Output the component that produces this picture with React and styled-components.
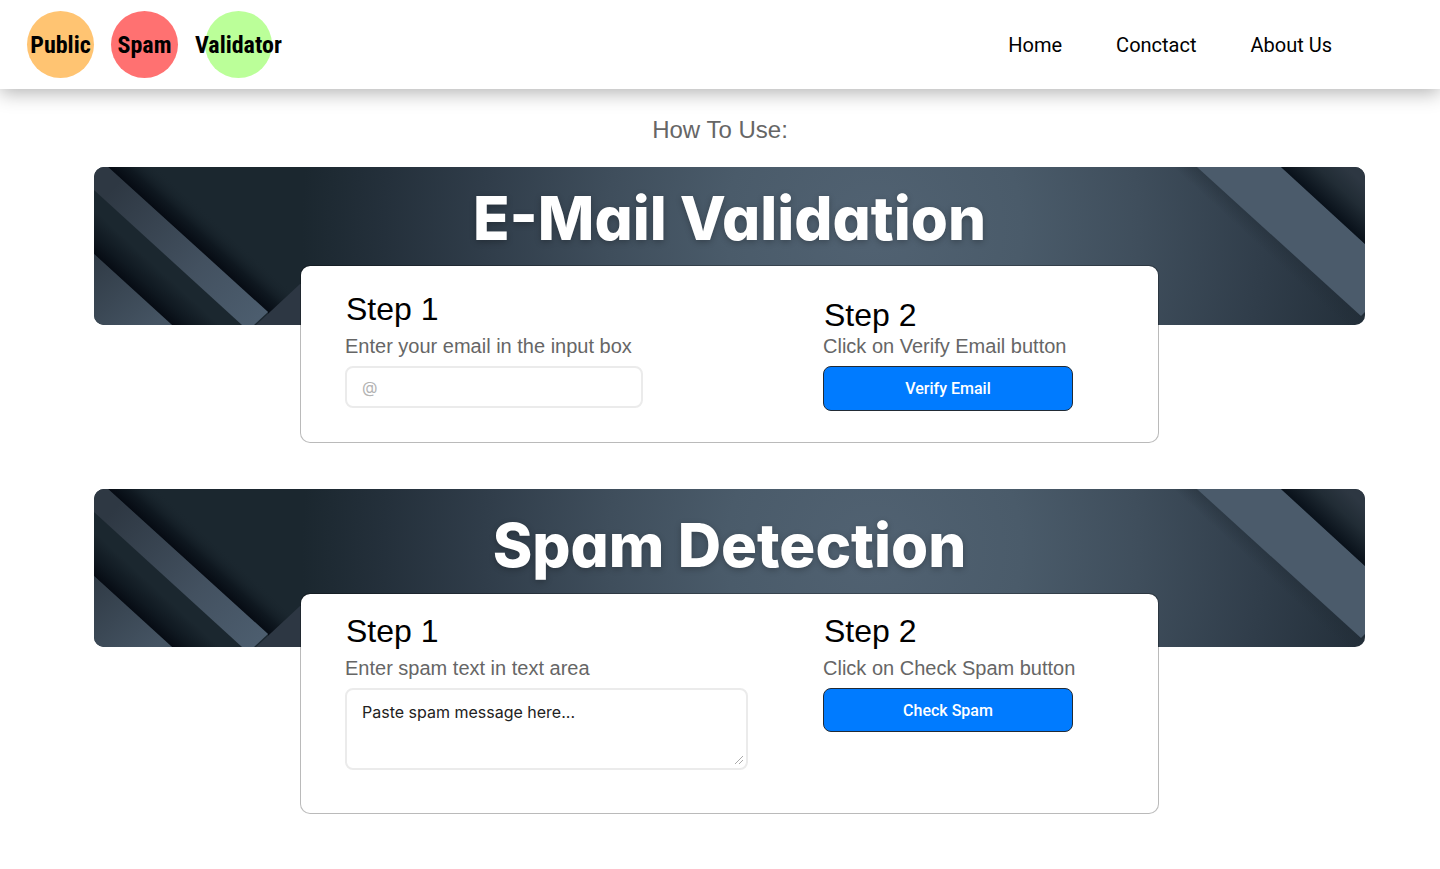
import React, { useId } from "react";
import styled, { createGlobalStyle } from "styled-components";

const GlobalStyle = createGlobalStyle`
  *, *::before, *::after { box-sizing: border-box; }
  body {
    margin: 0;
    background: #fff;
    color: #000;
    font-family: "Liberation Sans", Arial, sans-serif;
  }
`;

const Header = styled.header`
  display: flex;
  align-items: center;
  justify-content: space-between;
  height: 89px;
  padding: 0 108px 0 27px;
  background: #fff;
  box-shadow: 0 4px 18px rgba(0, 0, 0, 0.3);
`;

const Logo = styled.a`
  display: flex;
  gap: 17px;
  color: #000;
  text-decoration: none;
`;

const LogoWord = styled.span`
  display: grid;
  place-items: center;
  font-family: "Roboto Condensed", Roboto, sans-serif;
  font-size: 24px;
  font-weight: 700;
  line-height: 28px;

  &::before {
    content: "";
    grid-area: 1 / 1;
    width: 67px;
    height: 67px;
    border-radius: 50%;
    background: ${(p) => p.$color};
  }
`;

const LogoText = styled.span`
  grid-area: 1 / 1;
  z-index: 1;
`;

const Nav = styled.nav`
  display: flex;
  gap: 54px;
`;

const NavLink = styled.a`
  color: #000;
  font-family: Roboto, sans-serif;
  font-size: 20px;
  line-height: 24px;
  text-decoration: none;
`;

const Intro = styled.p`
  margin: 27px 0 23px;
  color: #666;
  font-size: 24px;
  line-height: 28px;
  text-align: center;
`;

const Main = styled.main`
  display: flex;
  flex-direction: column;
  gap: 46px;
  padding: 0 75px 55px 94px;
`;

const Guide = styled.section`
  display: flex;
  flex-direction: column;
  align-items: center;
`;

const Banner = styled.div`
  display: grid;
  width: 100%;
  height: 158px;
  border-radius: 10px;
  overflow: hidden;
`;

const Artwork = styled.svg`
  grid-area: 1 / 1;
  display: block;
  width: 100%;
  height: 158px;
`;

const Title = styled.h1`
  grid-area: 1 / 1;
  z-index: 1;
  place-self: start center;
  margin: 0;
  padding-top: ${(p) => p.$top}px;
  color: #fff;
  font-family: Inter, Lato, sans-serif;
  font-size: 60px;
  font-weight: 800;
  line-height: 76px;
  font-feature-settings: "cv11" 1;
  text-shadow: 0 2px 6px rgba(0, 0, 0, 0.25);
`;

const Card = styled.div`
  display: grid;
  grid-template-columns: minmax(0, 478fr) minmax(0, 289fr);
  align-items: start;
  z-index: 2;
  width: 68%;
  max-width: 859px;
  margin-top: -${(p) => p.$overlap}px;
  padding: ${(p) => p.$padTop}px 46px ${(p) => p.$padBottom}px 44px;
  border: 1px solid rgba(0, 0, 0, 0.27);
  border-radius: 10px;
  background: #fff;
  background-clip: padding-box;
`;

const Step = styled.div`
  display: flex;
  flex-direction: column;
  align-items: flex-start;
  gap: ${(p) => (p.$tight ? 0 : 6)}px;
  padding-top: ${(p) => (p.$tight ? 6 : 0)}px;
`;

const StepTitle = styled.h2`
  margin: 0 0 0 1px;
  font-size: 32px;
  font-weight: 400;
  line-height: 38px;
`;

const Field = styled.div`
  display: flex;
  flex-direction: column;
  gap: 8px;
  max-width: 100%;
`;

const Hint = styled.label`
  color: #666;
  font-size: 20px;
  line-height: 24px;
  white-space: nowrap;
`;

const TextInput = styled.input`
  width: 298px;
  height: 42px;
  padding: 0 15px;
  border: 2px solid #ebebeb;
  border-radius: 8px;
  outline: 0;
  font-family: Inter, sans-serif;
  font-size: 16px;

  &::placeholder { color: #b3b3b3; opacity: 1; }
`;

const TextArea = styled.textarea`
  display: block;
  width: 403px;
  height: 82px;
  padding: 12px 15px;
  border: 2px solid #ebebeb;
  border-radius: 8px;
  outline: 0;
  font-family: Inter, sans-serif;
  font-size: 16px;
  line-height: 20px;

  &::placeholder { color: #222; opacity: 1; }

  &::-webkit-resizer {
    background: linear-gradient(
      135deg,
      transparent 0 46%,
      #aaa 46% 54%,
      transparent 54% 70%,
      #aaa 70% 78%,
      transparent 78%
    ) 4px 3px / 8px 8px no-repeat;
  }
`;

const ActionButton = styled.button`
  width: 250px;
  height: ${(p) => p.$height}px;
  border: 1px solid #222b35;
  border-radius: 8px;
  background: #007bff;
  color: #fff;
  font-family: Roboto, sans-serif;
  font-size: 16px;
  font-weight: 500;
  cursor: pointer;
`;

function BannerArt() {
  const id = useId().replace(/[^a-zA-Z0-9]/g, "");
  const ref = (name) => `url(#${id}${name})`;
  return (
    <Artwork viewBox="0 0 1271 158" preserveAspectRatio="none" aria-hidden="true">
      <defs>
        <radialGradient id={`${id}base`} gradientUnits="userSpaceOnUse" cx="780" cy="60" r="590">
          <stop offset="0" stopColor="#516272" />
          <stop offset="0.25" stopColor="#4a5b6a" />
          <stop offset="0.45" stopColor="#3f4e5c" />
          <stop offset="0.66" stopColor="#303d4a" />
          <stop offset="0.83" stopColor="#24303b" />
          <stop offset="0.97" stopColor="#1b272f" />
        </radialGradient>
        <linearGradient id={`${id}stripe`} gradientUnits="userSpaceOnUse" x1="20" y1="20" x2="165" y2="150">
          <stop offset="0" stopColor="#2e3843" />
          <stop offset="0.6" stopColor="#435160" />
          <stop offset="1" stopColor="#4c5d6e" />
        </linearGradient>
        <linearGradient id={`${id}upper`} gradientUnits="userSpaceOnUse" x1="15" y1="0" x2="37" y2="-24">
          <stop offset="0" stopColor="#060b13" />
          <stop offset="0.4" stopColor="#0f1820" />
          <stop offset="1" stopColor="#1b272f" stopOpacity="0" />
        </linearGradient>
        <linearGradient id={`${id}lower`} gradientUnits="userSpaceOnUse" x1="0" y1="87" x2="22" y2="63">
          <stop offset="0" stopColor="#060b13" />
          <stop offset="0.4" stopColor="#0f1820" />
          <stop offset="1" stopColor="#1b272f" />
        </linearGradient>
        <linearGradient id={`${id}foot`} gradientUnits="userSpaceOnUse" x1="0" y1="90" x2="60" y2="158">
          <stop offset="0" stopColor="#303b46" />
          <stop offset="1" stopColor="#455463" />
        </linearGradient>
        <linearGradient id={`${id}corner`} gradientUnits="userSpaceOnUse" x1="1229" y1="38" x2="1258" y2="6">
          <stop offset="0" stopColor="#09111a" />
          <stop offset="0.55" stopColor="#212c35" />
          <stop offset="1" stopColor="#2d3742" />
        </linearGradient>
        <linearGradient id={`${id}edge`} gradientUnits="userSpaceOnUse" x1="1185" y1="75" x2="1174" y2="87">
          <stop offset="0" stopColor="#222d37" stopOpacity="0.45" />
          <stop offset="1" stopColor="#222d37" stopOpacity="0" />
        </linearGradient>
      </defs>
      <rect width="1271" height="158" fill={ref("base")} />
      <polygon points="14,0 70,0 242,158 174,158 174,145" fill={ref("upper")} />
      <polygon points="0,23 148,158 78,158 0,87" fill={ref("lower")} />
      <polygon points="0,0 14,0 174,145 160,158 148,158 0,23" fill={ref("stripe")} />
      <polygon points="0,87 78,158 0,158" fill={ref("foot")} />
      <polygon points="162,158 206,117 250,117 250,158" fill="#2d3743" />
      <polygon points="1103,0 1267,149 1271,145 1271,158 1249,158 1075,0" fill={ref("edge")} />
      <polygon points="1103,0 1187,0 1271,77 1271,145 1267,149" fill="#4b5b6b" />
      <polygon points="1187,0 1271,0 1271,77" fill={ref("corner")} />
    </Artwork>
  );
}

const logoWords = [
  { text: "Public", color: "#ffc472" },
  { text: "Spam", color: "#ff7171" },
  { text: "Validator", color: "#bbff99" },
];

export default function App() {
  return (
    <>
      <GlobalStyle />
      <Header>
        <Logo href="#home">
          {logoWords.map((word) => (
            <LogoWord key={word.text} $color={word.color}>
              <LogoText>{word.text}</LogoText>
            </LogoWord>
          ))}
        </Logo>
        <Nav>
          <NavLink href="#home">Home</NavLink>
          <NavLink href="#contact">Conctact</NavLink>
          <NavLink href="#about">About Us</NavLink>
        </Nav>
      </Header>
      <Intro>How To Use:</Intro>
      <Main>
        <Guide>
          <Banner>
            <BannerArt />
            <Title $top={13}>E-Mail Validation</Title>
          </Banner>
          <Card $overlap={60} $padTop={24} $padBottom={31}>
            <Step>
              <StepTitle>Step 1</StepTitle>
              <Field>
                <Hint htmlFor="email">Enter your email in the input box</Hint>
                <TextInput id="email" type="email" placeholder="@" />
              </Field>
            </Step>
            <Step $tight>
              <StepTitle>Step 2</StepTitle>
              <Field>
                <Hint htmlFor="verify">Click on Verify Email button</Hint>
                <ActionButton id="verify" type="button" $height={45}>Verify Email</ActionButton>
              </Field>
            </Step>
          </Card>
        </Guide>
        <Guide>
          <Banner>
            <BannerArt />
            <Title $top={18}>Spam Detection</Title>
          </Banner>
          <Card $overlap={54} $padTop={18} $padBottom={43}>
            <Step>
              <StepTitle>Step 1</StepTitle>
              <Field>
                <Hint htmlFor="message">Enter spam text in text area</Hint>
                <TextArea id="message" placeholder="Paste spam message here..." />
              </Field>
            </Step>
            <Step>
              <StepTitle>Step 2</StepTitle>
              <Field>
                <Hint htmlFor="check">Click on Check Spam button</Hint>
                <ActionButton id="check" type="button" $height={44}>Check Spam</ActionButton>
              </Field>
            </Step>
          </Card>
        </Guide>
      </Main>
    </>
  );
}
